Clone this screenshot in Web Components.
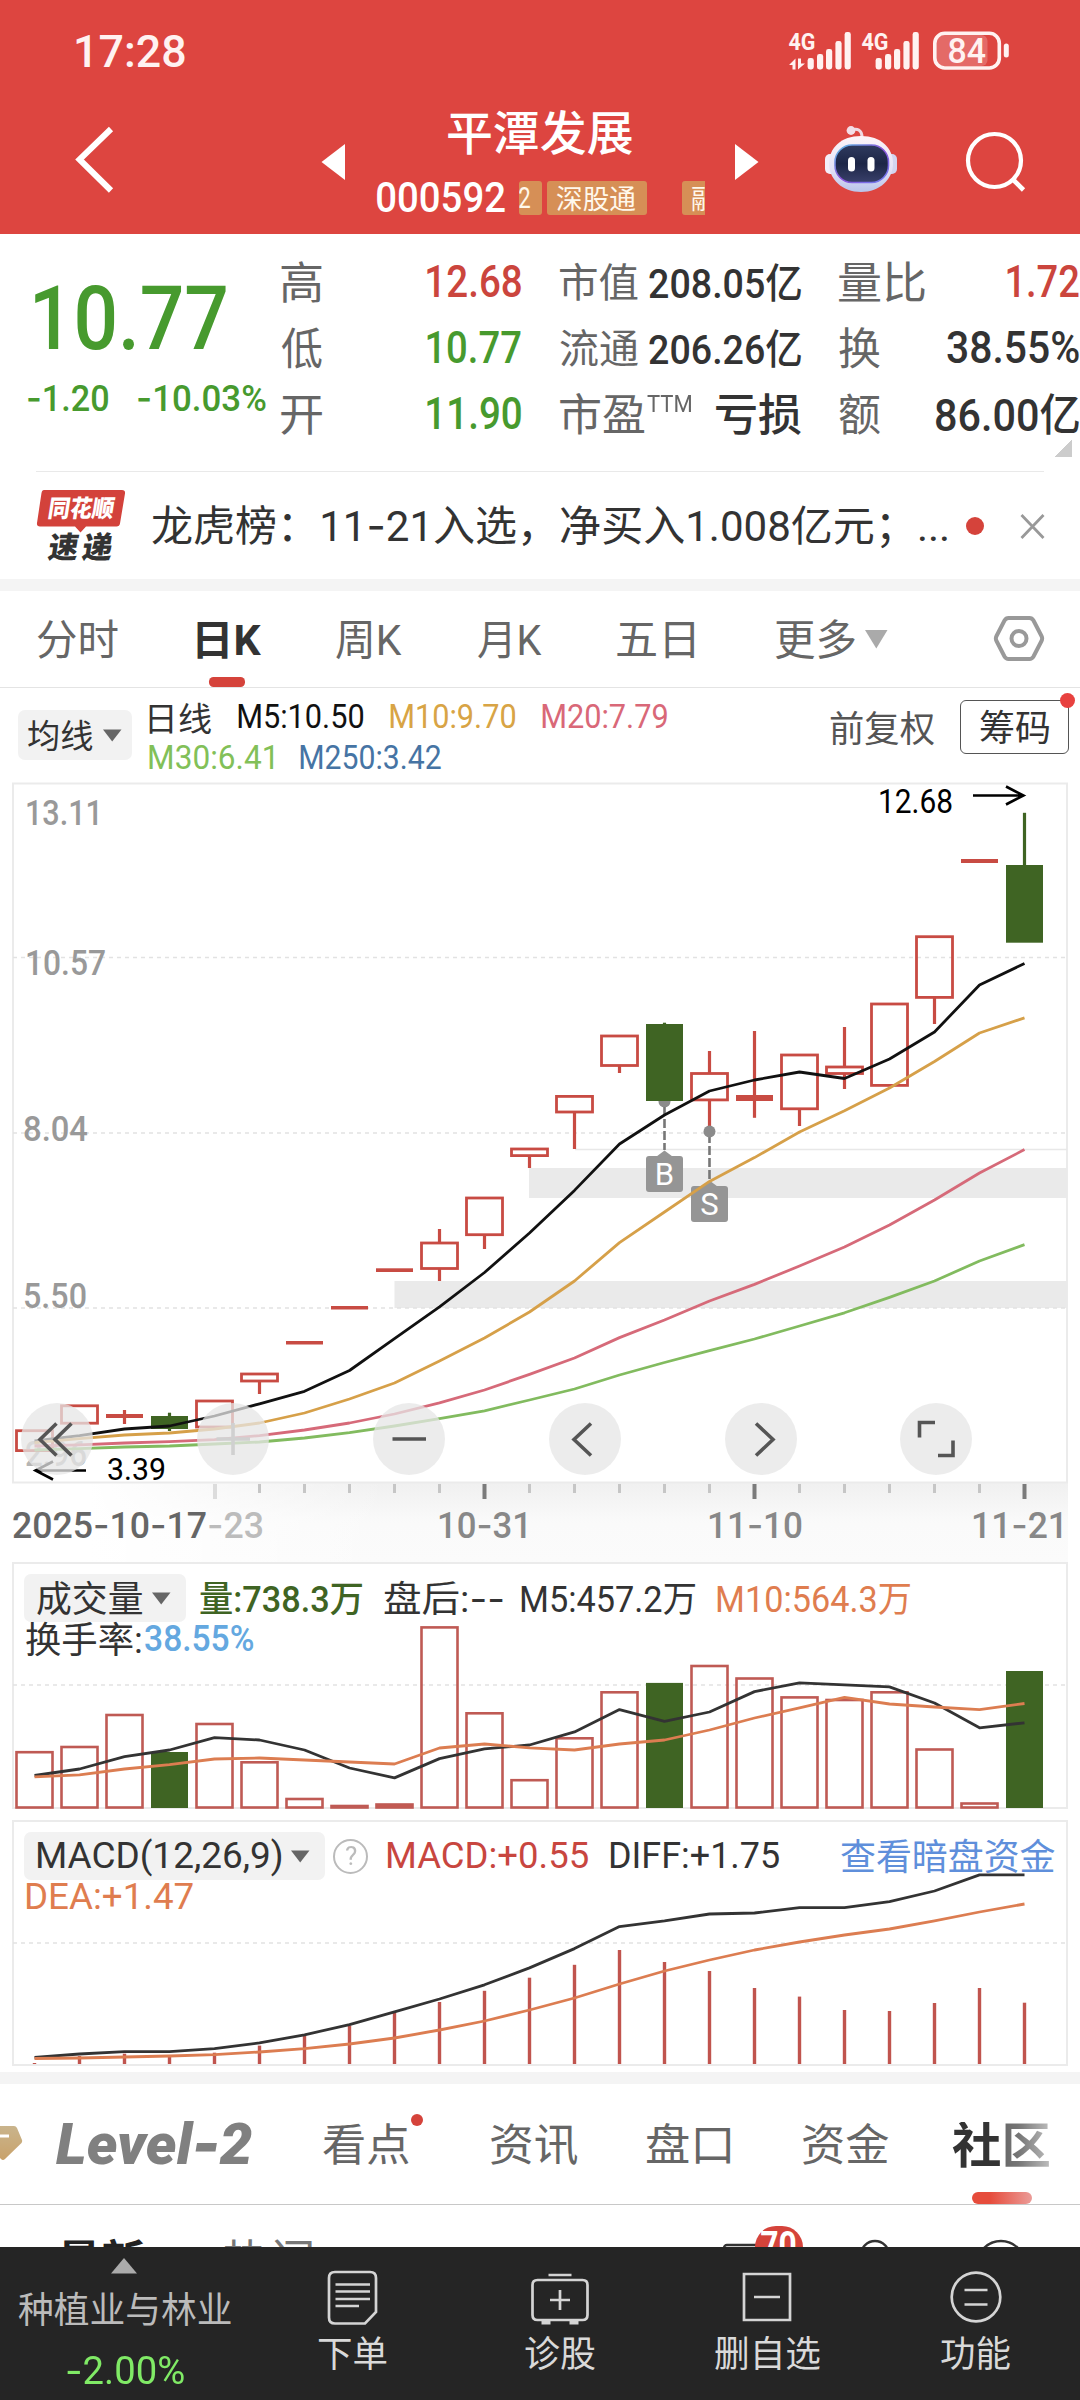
<!DOCTYPE html>
<html lang="zh-CN">
<head>
<meta charset="utf-8">
<title>平潭发展 000592</title>
<style>
html,body{margin:0;padding:0;background:#fff}
body{width:1080px;height:2400px;overflow:hidden;font-family:Roboto,"Noto Sans CJK SC",sans-serif;color:#333}
</style>
</head>
<body>
<stock-app></stock-app>
<script>
const make = (name, css, html, extra) => customElements.define(name, class extends HTMLElement {
  constructor() {
    super();
    const root = this.attachShadow({mode: 'open'});
    root.innerHTML = `<style>:host{display:block;box-sizing:border-box}svg{display:block;flex:none}*{box-sizing:border-box}${css}</style>${typeof html === 'function' ? html(this) : html}`;
    if (extra) extra(root, this);
  }
});

/* ---------- header ---------- */
const bars = (x) => [[0,58],[9.4,54],[18.4,49],[27.8,41],[37,32]]
  .map(([dx,y]) => `<rect x="${x+dx}" y="${y}" width="6.2" height="${69.5-y}" rx="2.4"/>`).join('');
make('status-bar', `
:host{display:flex;height:102px;align-items:center;justify-content:space-between;padding-left:76px;color:#fff2f1}
text{font:700 24px Roboto,sans-serif}
`, `<fit-text w="109" s="45" b="500">17:28</fit-text>
<svg width="300" height="102" viewBox="780 0 300 102" fill="#fff2f1">
<text x="788.5" y="50" textLength="27" lengthAdjust="spacingAndGlyphs">4G</text>
<text x="861.5" y="50" textLength="27" lengthAdjust="spacingAndGlyphs">4G</text>
${bars(807.6)}${bars(875.6)}
<path d="M789 65l6.500-6.500v11h-3v-4.500zM798 58.500v11l7-6h-4v-5z"/>
<rect x="936" y="35" width="51.500" height="31" rx="6" fill-opacity=".22"/>
<rect x="934.800" y="33.300" width="64.500" height="34.700" rx="10" fill="none" stroke="#fff2f1" stroke-width="3.600"/>
<rect x="1003.800" y="43.500" width="5" height="14" rx="2.500"/>
<text x="947.500" y="63" textLength="38.500" lengthAdjust="spacingAndGlyphs" style="font-size:35px;font-weight:500">84</text>
</svg>`);

make('title-bar', `
:host{display:flex;height:132px;color:#fff}
.mid{width:360px;height:132px;display:flex;flex-direction:column}
.name{height:60px;display:flex;align-items:center;padding-left:88px}
.code{height:72px;display:flex;align-items:center;padding-left:17px;gap:14px}
.tags{width:186px;height:34px;display:flex;overflow:hidden}
.tag{flex:none;height:34px;background:#d68f56;border-radius:3px;display:flex;align-items:center;color:#fff8ec}
`, `<svg width="360" height="132" viewBox="0 102 360 132">
<path d="M111 129L79.500 159.500L111 190.500" fill="none" stroke="#fff" stroke-width="6"/>
<path d="M321.500 162L345 144V180z" fill="#fff"/></svg>
<div class="mid">
<div class="name"><fit-text w="184" s="46.5" b="500">平潭发展</fit-text></div>
<div class="code"><fit-text w="128" s="42.5" b="500">000592</fit-text>
<div class="tags">
<div class="tag" style="width:22.5px"><fit-text w="11.5" s="29">2</fit-text></div>
<div class="tag" style="width:100px;margin-left:5.5px;padding-left:10px"><fit-text w="79" s="27">深股通</fit-text></div>
<div class="tag" style="width:60px;margin-left:35px;padding-left:10px"><fit-text w="25" s="27">融</fit-text></div>
</div></div></div>
<svg width="360" height="132" viewBox="720 102 360 132">
<defs><linearGradient id="h" x1="0" y1="0" x2="0" y2="1"><stop offset="0" stop-color="#fdf4f8"/><stop offset=".6" stop-color="#e4e2f6"/><stop offset="1" stop-color="#b9c4ea"/></linearGradient>
<linearGradient id="e" x1="0" y1="0" x2="1" y2="1"><stop offset="0" stop-color="#5fc3e6"/><stop offset=".5" stop-color="#8a50d8"/><stop offset="1" stop-color="#6f7ff0"/></linearGradient>
<linearGradient id="f" x1="0" y1="0" x2="0" y2="1"><stop offset="0" stop-color="#2f3a5e"/><stop offset=".5" stop-color="#1d2647"/><stop offset="1" stop-color="#39406a"/></linearGradient></defs>
<path d="M758.500 162L735 144V180z" fill="#fff"/>
<path d="M851 130.500c6-3 11-.5 11 7" fill="none" stroke="#f0d9e2" stroke-width="3"/><circle cx="851" cy="130.500" r="4.400" fill="#f3dde6"/>
<rect x="825" y="154" width="12" height="20" rx="5" fill="#f3eef9"/><rect x="885" y="154" width="12" height="20" rx="5" fill="#d3d5f0"/>
<path d="M861 136c20 0 32 12 32 27.500S880 192 861 192s-32-13-32-28.500S841 136 861 136z" fill="url(#h)"/>
<rect x="835" y="145" width="53.500" height="37.500" rx="17" fill="url(#f)" stroke="url(#e)" stroke-width="1.600"/>
<rect x="848" y="157" width="7" height="14.500" rx="3.500" fill="#fff"/><rect x="867.500" y="157" width="7" height="14.500" rx="3.500" fill="#fff"/>
<circle cx="994.500" cy="160.500" r="26.500" fill="none" stroke="#fff" stroke-width="4.200"/>
<path d="M1013 179.500l10.500 10.500" stroke="#fff" stroke-width="4.600"/></svg>`);

/* ---------- quote ---------- */
make('quote-panel', `
:host{display:grid;grid-template-columns:281px 240px 241px 240px;column-gap:0;height:237px;padding-top:15px;position:relative}
.price{color:#479a2e;padding:26px 0 0 35px}
.chg{display:flex;margin:16px 0 0 -8px;gap:29px}
.col{display:grid;grid-auto-rows:66px;color:#666}
.c2{margin-left:39px;margin-right:-39px}.c3{margin-left:77px;margin-right:-77px}
.r{display:flex;align-items:center;justify-content:space-between}
.l{display:flex;gap:2px}
.red{color:#cb453d}.gr{color:#479a2e}.k{color:#333}
i{position:absolute;right:8px;bottom:14px;width:18px;height:18px;background:linear-gradient(135deg,#fff0 50%,#ccc 50%)}
fit-text i{all:unset;font-family:Inter}
`, `<div class="price"><fit-text w="191" s="88.5" b="500">10.77</fit-text>
<div class="chg"><fit-text w="81" s="36.5" b="500"><i>-</i>1.20</fit-text><fit-text w="129" s="36.5" b="500"><i>-</i>10.03%</fit-text></div></div>
<div class="col">
<div class="r"><fit-text w="41" s="44">高</fit-text><fit-text class="red" w="94" s="44" b="500">12.68</fit-text></div>
<div class="r"><fit-text w="41" s="44">低</fit-text><fit-text class="gr" w="94" s="44" b="500">10.77</fit-text></div>
<div class="r"><fit-text w="41" s="44">开</fit-text><fit-text class="gr" w="94" s="44" b="500">11.90</fit-text></div></div>
<div class="col c2">
<div class="r"><fit-text w="78" s="40">市值</fit-text><fit-text class="k" w="152" s="41" b="500">208.05亿</fit-text></div>
<div class="r"><fit-text w="78" s="40">流通</fit-text><fit-text class="k" w="152" s="41" b="500">206.26亿</fit-text></div>
<div class="r"><div class="l"><fit-text w="85" s="44">市盈</fit-text><fit-text w="44" s="24">TTM</fit-text></div><fit-text class="k" w="85" s="44" b="500">亏损</fit-text></div></div>
<div class="col c3">
<div class="r"><fit-text w="86" s="44">量比</fit-text><fit-text class="red" w="72" s="44" b="500">1.72</fit-text></div>
<div class="r"><fit-text w="41" s="44">换</fit-text><fit-text class="k" w="132" s="44" b="500">38.55%</fit-text></div>
<div class="r"><fit-text w="41" s="44">额</fit-text><fit-text class="k" w="143" s="44" b="500">86.00亿</fit-text></div></div><i></i>`);

make('news-strip', `
:host{display:flex;align-items:center;height:108px;margin:0 36px;border-top:1.5px solid #e9e9e9}
text{font-family:"Noto Sans CJK SC",sans-serif;font-weight:900}
`, `<svg width="90" height="76" viewBox="36 487 90 76">
<path d="M44 489h78q3.500 0 3 3.500l-5 30q-.5 3-3.500 3H86l-5.500 6-5.500-6H40q-3.500 0-3-3.500l4.500-30q.5-3 2.500-3z" fill="#d3423b"/>
<g transform="translate(47 516) skewX(-9)"><text x="0" y="0" font-size="24" textLength="66" lengthAdjust="spacingAndGlyphs" fill="#fff">同花顺</text></g>
<g transform="translate(47 557) skewX(-9)"><text x="0" y="0" font-size="30" textLength="64" lengthAdjust="spacing" fill="#333">速递</text></g></svg>
<fit-text style="margin-left:26px" w="795" s="42.5">龙虎榜：11<i>-</i>21入选，净买入1.008亿元；...</fit-text>
<svg style="margin-left:14px" width="90" height="40" viewBox="961 505 90 40"><circle cx="975" cy="525" r="9" fill="#d5433b"/><path d="M1021.500 514l22 23m0-23l-22 23" stroke="#999" stroke-width="2.800"/></svg>`);

make('section-gap', ':host{height:12px;background:#f4f4f4}', '');

/* ---------- period tabs ---------- */
make('period-tabs', `
:host{display:flex;height:97px;align-items:center;border-bottom:1.5px solid #e4e4e4;color:#666;padding-left:37px}
.on{color:#333;position:relative;display:flex;height:95px;align-items:center}
.on::after{content:"";position:absolute;left:12px;bottom:0;width:36px;height:10px;border-radius:4.5px;background:#d5433b}
`, `<fit-text w="81" s="42">分时</fit-text>
<div class="on" style="margin-left:79px"><fit-text w="64" s="42" b="700">日K</fit-text></div>
<fit-text style="margin-left:75px" w="66" s="42">周K</fit-text>
<fit-text style="margin-left:76px" w="64" s="42">月K</fit-text>
<fit-text style="margin-left:75px" w="77" s="42">五日</fit-text>
<fit-text style="margin-left:81px" w="80" s="42">更多</fit-text>
<svg width="200" height="60" viewBox="856 609 200 60"><path d="M866 630h22.500l-11.200 18.500z" fill="#aaa"/>
<path d="M1009.500 618h21q2.500 0 4 2.500l8 15.500q1.300 2.500 0 5l-8 15.500q-1.500 2.500-4 2.500h-21q-2.500 0-4-2.500l-8-15.500q-1.300-2.500 0-5l8-15.500q1.500-2.500 4-2.500z" fill="none" stroke="#999" stroke-width="4"/><circle cx="1020" cy="638.500" r="7.500" fill="none" stroke="#999" stroke-width="4"/></svg>`);

make('pick-pill', `:host{display:flex;align-items:center;background:#f2f2f2;border-radius:7px;flex:none}
svg{margin-left:9.5px}`, `<slot></slot><svg width="19" height="13" viewBox="0 0 19 13"><path d="M0 .5h18.500L9.200 12.500z" fill="#666"/></svg>`);

make('ma-legend', `
:host{display:flex;height:86px;align-items:flex-start;padding-left:18px}
.l{display:grid;grid-auto-rows:41px;margin:8.5px 0 0 17px;width:519px}
.l div{display:flex;align-items:center;gap:27px}
.q{margin:0 0 0 162px;height:80px;display:flex;align-items:center}
.c{margin:12px 0 0 26px;width:109px;height:54px;border:1.8px solid #555;border-radius:6px;display:flex;align-items:center;justify-content:center;position:relative}
.c::after{content:"";position:absolute;right:-7px;top:-8px;width:15px;height:15px;border-radius:50%;background:#e8413f}
`, `<pick-pill style="width:114px;height:50px;margin-top:22px;padding-left:10px"><fit-text w="65" s="33.5">均线</fit-text></pick-pill>
<div class="l"><div><fit-text w="62" s="33">日线</fit-text><fit-text w="125" s="33.5" style="color:#111">M5:10.50</fit-text><fit-text w="125" s="33.5" style="color:#d8a445">M10:9.70</fit-text><fit-text w="125" s="33.5" style="color:#d96878">M20:7.79</fit-text></div>
<div><fit-text w="124" s="33.5" style="color:#82c058">M30:6.41</fit-text><fit-text w="141" s="33.5" style="color:#4674a4">M250:3.42</fit-text></div></div>
<div class="q"><fit-text w="104" s="36" style="color:#555">前复权</fit-text></div>
<div class="c"><fit-text w="69" s="36">筹码</fit-text></div>`);

/* ---------- charts ---------- */
const X = i => 34.5 + 45 * i;
const RED = '#c84b43', GREEN = '#3f6423';
const line = (ys, c, w = 2.8) => `<polyline fill="none" stroke="${c}" stroke-width="${w}" stroke-linejoin="round" points="${ys.map((y, i) => X(i) + ',' + y).join(' ')}"/>`;
const txt = (s, x, y, w, size, c, extra = '') => `<text x="${x}" y="${y}" font-size="${size}" fill="${c}" textLength="${w}" lengthAdjust="spacingAndGlyphs" ${extra}>${s.replace(/-/g, '<tspan font-family="Inter">-</tspan>')}</text>`;
const dash = y => `<path d="M13 ${y}H1067" stroke="#e2e2e2" stroke-width="1.500" stroke-dasharray="4 4"/>`;
// body top, body bottom, wick top, wick bottom, kind: h hollow, g filled, s solid line
const K = [[1430.7,1450.6],[1405.8,1423.2],[1414,1418,1410,1424,'s'],[1416,1429,1412.7,1431,'g'],[1401,1427,1401,1430],[1374,1381,1374,1394],
[1341,1344.5,0,0,'s'],[1306,1309.500,0,0,'s'],[1268.300,1272,0,0,'s'],[1243,1268.500,1229,1281],[1198,1234.700,1198,1249],[1149,1155.600,1149,1168],
[1096.400,1112,1096.400,1149],[1036,1065.500,1036,1073],[1024,1101,1022.700,1101,'g'],[1073.500,1099.900,1051,1131.700],[1095,1101,1031,1117.800,'s'],
[1055,1108.800,1055,1126],[1067,1073.500,1027,1089],[1004,1085.400],[936.700,997.400,936.700,1024],[859,863,0,0,'s'],[865,942.700,812.800,942.700,'g']];
const candles = K.map(([a,b,c,d,k='h'], i) => {
  const x = X(i), col = k === 'g' ? GREEN : RED;
  let s = '';
  if (c && c < a) s += `<path d="M${x} ${c}V${a}" stroke="${col}" stroke-width="3.200"/>`;
  if (d && d > b) s += `<path d="M${x} ${b}V${d}" stroke="${col}" stroke-width="3.200"/>`;
  s += k === 'h' ? `<rect x="${x-18}" y="${a}" width="36" height="${b-a}" fill="none" stroke="${col}" stroke-width="2.800"/>`
                 : `<rect x="${x-18.5}" y="${a}" width="37" height="${b-a}" fill="${col}"/>`;
  return s;
}).join('');
const M5 = [1441,1435.6,1429,1426,1416,1403.8,1391.3,1370.5,1338.6,1306.8,1272.5,1233,1190.4,1144,1115,1091,1080,1072,1078.5,1059,1032,985,963.5];
const M10 = [1442.6,1438.6,1435,1433,1429,1423,1413,1399,1383,1361,1338,1312,1281,1242.6,1212,1181.4,1157.6,1132,1110.8,1088,1061.5,1033,1017.8];
const M20 = [1446,1444.8,1443,1441.6,1439.6,1435.6,1430,1423,1414,1402.8,1390,1374.4,1358,1337.6,1320,1301,1284.4,1266,1247,1225,1200,1173,1149.6];
const M30 = [1450,1448.6,1447,1446,1444,1442,1438,1432.6,1426,1418.7,1410.8,1400,1389,1375,1362.5,1350.6,1339,1326,1312.8,1297.4,1281,1261,1244.6];
const flag = (x, y, s) => `<path d="M${x} ${y-6}l8 6h-16z" fill="#959595"/><rect x="${x-18.500}" y="${y-0.500}" width="37" height="36" rx="3" fill="#959595"/><text x="${x}" y="${y+28}" font-size="31" fill="#fff" text-anchor="middle">${s}</text>`;
const ticks = Array.from({length: 19}, (_, k) => k + 4).map(i => {
  const major = [10,16,22].includes(i), first = i === 4;
  return `<path d="M${X(i)+(first?0.500:0)} 1484v${major||first?15:9}" stroke="${major?'#7b7b7b':first?'#dcdcdc':'#c6c6c6'}" stroke-width="${major||first?4:3}"/>`;
}).join('');

make('chart-tools', `
:host{display:flex;gap:103.900px;padding:629px 0 0 21px;height:701px}
div{width:72px;height:72px;border-radius:50%;background:rgba(230,230,230,.75)}
svg{fill:none;stroke:#555;stroke-width:3.600}`,
['M35.500 20.500L19 36.500L35.500 52.500M50.500 20.500L34 36.500L50.500 52.500','M19.500 36H53M36 20V52','M19.500 36H53','M42 20.500L25 36.500L42 52.500','M31 20.500L48 36.500L31 52.500','M35 19.500H19.500V34.500M38 52.500H53V37.500']
.map((d,i) => `<div><svg width="72" height="72" viewBox="0 0 72 72"${i===1?' style="stroke:#d0d0d0"':''}><path d="${d}"/></svg></div>`).join(''));

make('kline-chart', `
:host{display:grid;height:784px}
svg{grid-area:1/1}chart-tools{grid-area:1/1}
text{font-family:Roboto,"Noto Sans CJK SC",sans-serif}`,
`<svg width="1080" height="789" viewBox="0 774 1080 789">
<defs><linearGradient id="a" x1="0" y1="0" x2="0" y2="1"><stop offset="0" stop-color="#f0f0f0"/><stop offset=".5" stop-color="#fafafa"/><stop offset="1" stop-color="#fbfbfb"/></linearGradient>
<linearGradient id="b" x1="0" y1="0" x2="1" y2="0"><stop offset="0" stop-color="#fff"/><stop offset="1" stop-color="#fff" stop-opacity="0"/></linearGradient></defs>
<rect x="90" y="1483" width="978" height="80" fill="url(#a)"/><rect x="89" y="1483" width="300" height="80" fill="url(#b)"/>
<rect x="13" y="783.500" width="1054" height="699" fill="none" stroke="#ebebeb" stroke-width="2"/>
<rect x="529" y="1168" width="538" height="30" fill="#eaeaea"/><rect x="394.500" y="1281" width="672" height="27" fill="#eaeaea"/>
${dash(957.6)}${dash(1133)}${dash(1308)}<path d="M575 1149.500H1067" stroke="#e8e8e8" stroke-width="1.300"/>
${txt('2.96',25,1466,62,35.500,'#b5b5b5','font-weight="500"')}
<circle cx="664.500" cy="1101.500" r="6" fill="#8b8b8b"/>
${candles}
<path d="M664.500 1107V1150M709.500 1134V1180" stroke="#777" stroke-width="2.600" stroke-dasharray="9 3"/>
<circle cx="709.500" cy="1131.500" r="6" fill="#8b8b8b"/>
${flag(664.500,1156.500,'B')}${flag(709.500,1186.500,'S')}
${line(M5,'#111')}${line(M10,'#d6a049')}${line(M20,'#d66a79')}${line(M30,'#82bb5f')}
${txt('13.11',25,825,78,35.500,'#999','font-weight="500"')}${txt('10.57',25,975,81,35.500,'#999','font-weight="500"')}
${txt('8.04',23,1141,65,35.500,'#999','font-weight="500"')}${txt('5.50',23,1308,64,35.500,'#999','font-weight="500"')}
${txt('12.68',878,813,75,32.500,'#000')}${txt('3.39',107,1480,59,32,'#000')}
<path d="M973 795.500H1023M1006 786.500L1023.500 795.500L1006 804.500" fill="none" stroke="#000" stroke-width="2.600"/>
<path d="M86 1470.500H36M53 1461.500L35.500 1470.500L53 1479.500" fill="none" stroke="#000" stroke-width="2.600"/>
${ticks}
${txt('2025-10-17',12,1537.500,195,36,'#666','font-weight="500"')}${txt('-23',207,1537.500,57,36,'#bcbcbc','font-weight="500"')}
${txt('10-31',437,1537.500,95,36,'#888','font-weight="500"')}${txt('11-10',707,1537.500,96,36,'#888','font-weight="500"')}${txt('11-21',971,1537.500,97,36,'#888','font-weight="500"')}
</svg><chart-tools></chart-tools>`);

const V = [1752.2,1747,1715,1752,1724,1762.3,1799,1806,1804.5,1627.4,1713.3,1780.2,1738.3,1692.3,1682.9,1666,1678.5,1697.4,1700,1692.3,1749.5,1803.5,1671];
const V5 = [1775.5,1769,1756.6,1750,1737.6,1740,1750,1768,1777.9,1758.6,1748.8,1745,1731.9,1709.6,1721.4,1712,1691.6,1682.9,1684.9,1686.9,1703,1727.8,1722.8];
const V10 = [1776.8,1774.8,1769,1764.7,1759,1758,1760,1762,1764,1748,1744,1747.8,1750,1744,1740,1730,1718,1707.9,1697.4,1704,1707,1709.6,1703.5];
const panelCss = `
:host{display:grid;height:257px}
svg{grid-area:1/1}
.h{grid-area:1/1;display:flex;flex-direction:column;width:1080px}
.r1{display:flex;align-items:center;height:48px;padding-left:24px}
.r2{display:flex;align-items:center;height:34px;padding-left:26px}`;
make('volume-chart', panelCss + `.h{padding-top:16px}`, `<svg width="1080" height="257" viewBox="0 1558 1080 257">
<rect x="13" y="1563" width="1054" height="245" fill="none" stroke="#ebebeb" stroke-width="2"/>${dash(1685)}
${V.map((y,i) => [3,14,22].includes(i) ? `<rect x="${X(i)-18.500}" y="${y}" width="37" height="${1808-y}" fill="${GREEN}"/>` : `<rect x="${X(i)-18}" y="${y}" width="36" height="${1807.5-y}" fill="${i===7||i===8?'#d8564d':'none'}" stroke="#bf5a54" stroke-width="2.600"/>`).join('')}
${line(V5,'#333')}${line(V10,'#dc7d51')}</svg>
<div class="h"><div class="r1">
<pick-pill style="width:162px;height:48px;padding-left:13px"><fit-text w="105" s="36.5">成交量</fit-text></pick-pill>
<fit-text style="margin-left:14px;color:#3f6423" w="162" s="36" b="500">量:738.3万</fit-text>
<fit-text style="margin-left:22px" w="121" s="36">盘后:<i>--</i></fit-text>
<fit-text style="margin-left:16px" w="174" s="36">M5:457.2万</fit-text>
<fit-text style="margin-left:22px;color:#df7d4f" w="193" s="36">M10:564.3万</fit-text></div>
<div class="r2"><fit-text w="115" s="36.5">换手率:</fit-text><fit-text style="margin-left:4px;color:#64a8e0" w="108" s="36" b="500">38.55%</fit-text></div></div>`);

const D = [2057.4,2054,2051.7,2051.7,2048.6,2042.9,2034.8,2024.6,2011.8,1999,1984.8,1967.9,1948.6,1926.6,1920.9,1914,1913,1907.7,1907.7,1901.6,1891,1874.9,1874.9];
const E = [2058.5,2058,2057,2056,2054.7,2052,2048.6,2044,2038,2030,2021,2010,1998,1984,1971,1960,1950,1942,1935,1929,1920.9,1912,1904];
const H = [2063,2056,2053.7,2056,2052.7,2045.6,2035.5,2025.7,2012.5,2002,1990.8,1977.7,1964.8,1950,1962,1971,1988,1996.6,2010,2011,2003,1988,2002.7];
make('macd-chart', panelCss + `.h{padding-top:17px}.q{width:35px;height:35px;border:2.500px solid #bbb;border-radius:50%;margin-left:8px;display:flex;align-items:center;justify-content:center;color:#bbb}`,
`<svg width="1080" height="257" viewBox="0 1815 1080 257">
<rect x="13" y="1821" width="1054" height="244" fill="none" stroke="#ebebeb" stroke-width="2"/>${dash(1943)}
${H.map((y,i) => `<path d="M${X(i)} ${y}V2064" stroke="#c0544e" stroke-width="3.400"/>`).join('')}
${line(D,'#333')}${line(E,'#dc7d51')}</svg>
<div class="h"><div class="r1">
<pick-pill style="width:301px;height:48px;padding-left:13px"><fit-text w="244" s="36">MACD(12,26,9)</fit-text></pick-pill>
<div class="q"><fit-text w="12" s="26">?</fit-text></div>
<fit-text style="margin-left:19px;color:#c8463f" w="201" s="36">MACD:+0.55</fit-text>
<fit-text style="margin-left:22px" w="169" s="36">DIFF:+1.75</fit-text>
<fit-text style="margin-left:62px;color:#5f8fdb" w="214" s="36.5">查看暗盘资金</fit-text></div>
<div class="r2"><fit-text style="color:#df7d4f" w="167" s="36">DEA:+1.47</fit-text></div></div>`);

/* ---------- content tabs ---------- */
make('content-tabs', `
:host{display:flex;height:121px;align-items:center;border-bottom:1.500px solid #c8c8c8;color:#666}
.n,.on{position:relative;display:flex;height:119px;align-items:center}
.n::after{content:"";position:absolute;right:-14px;top:29px;width:12px;height:12px;border-radius:50%;background:#d5433b}
.on::after{content:"";position:absolute;left:20px;bottom:0;width:60px;height:12px;border-radius:6px;background:linear-gradient(90deg,#e64c3c 30%,#eb9c98)}
`, `<svg width="24" height="60" viewBox="0 2114 24 60"><defs><linearGradient id="g" x1="0" y1="0" x2="0" y2="1"><stop offset="0" stop-color="#c9b48c"/><stop offset="1" stop-color="#c9a26b"/></linearGradient></defs>
<path d="M-20 2126H14q2 0 3 2l5 12q.5 1.500-.5 3L5 2159q-2 2-4 0L-20 2140z" fill="url(#g)"/><path d="M-2 2136H9" stroke="#fff" stroke-width="3"/></svg>
<fit-text style="margin-left:32px;color:#808080;font-style:italic" w="196" s="58" b="900">Level<i>-</i>2</fit-text>
<div class="n" style="margin-left:71px"><fit-text w="86" s="44.5">看点</fit-text></div>
<fit-text style="margin-left:82px" w="87" s="44.5">资讯</fit-text>
<fit-text style="margin-left:69px" w="83" s="44.5">盘口</fit-text>
<fit-text style="margin-left:73px" w="86" s="44.5">资金</fit-text>
<div class="on" style="margin-left:63px"><fit-text w="97" s="49" b="700" fade>社区</fit-text></div>`);

make('feed-head', `
:host{display:flex;height:42px;overflow:hidden;align-items:flex-start}
fit-text{margin-top:33px}
.b{position:relative;margin-left:408px}
.n{position:absolute;left:35px;top:21px;width:48px;height:42px;border-radius:21px;background:#d5433b;color:#fff;padding-left:6px}
.n fit-text{margin-top:1px}`,
`<fit-text style="margin-left:58px;color:#222" w="87" s="44.500" b="700">最新</fit-text>
<fit-text style="margin-left:78px;color:#777" w="89" s="44.500">热门</fit-text>
<div class="b"><svg width="350" height="42" viewBox="720 2205 350 42" fill="none" stroke="#333" stroke-width="2.400"><rect x="724" y="2245" width="50" height="40" rx="3"/><circle cx="875" cy="2255" r="14"/><circle cx="1001" cy="2265" r="24"/></svg>
<div class="n"><fit-text w="35" s="38" b="700">70</fit-text></div></div>`);

/* ---------- bottom bar ---------- */
make('bar-item', `:host{display:flex;flex-direction:column;align-items:center;color:#d9d9d9}
.i{height:88px;padding-top:20px}`, `<div class="i"><slot name="icon"></slot></div><slot></slot>`);
make('bottom-bar', `
:host{display:grid;grid-template-columns:248px 208px 207px 208px 209px;height:153px;background:#252525}
.s{display:flex;flex-direction:column;align-items:center;color:#bbb;padding-top:11px}
svg{fill:none;stroke:#d4d4d4;stroke-width:2.700}`,
`<div class="s"><svg width="26" height="16" viewBox="0 0 26 16"><path d="M13 0L26 15.500H0z" fill="#ababab" stroke="none"/></svg>
<fit-text style="margin-top:17px" w="213" s="36.500">种植业与林业</fit-text>
<fit-text style="margin-top:24px;color:#80ea66" w="119" s="38.500"><i>-</i>2.00%</fit-text></div>
<bar-item><svg slot="icon" width="60" height="60" viewBox="322 2267 60 60"><path d="M335 2272H370q6 0 6 6V2312L365 2323.500H335q-6 0-6-6V2278q0-6 6-6zM335.500 2284.500H370M335.500 2291.500H370M335.500 2299H370M335.500 2306H359"/></svg><fit-text w="69" s="36">下单</fit-text></bar-item>
<bar-item><svg slot="icon" width="60" height="60" viewBox="529.500 2267 60 60"><path d="M548 2275H571M537 2280H582q5 0 5 5V2315q0 5-5 5H537q-5 0-5-5V2285q0-5 5-5zM559.500 2290V2310M549.500 2300H569.500"/><path d="M541 2322.500H550M569 2322.500H578" stroke-width="4"/></svg><fit-text w="70" s="36">诊股</fit-text></bar-item>
<bar-item><svg slot="icon" width="60" height="60" viewBox="737 2267 60 60"><path d="M744 2274H790V2320H744zM754 2297H780"/></svg><fit-text w="105" s="36">删自选</fit-text></bar-item>
<bar-item><svg slot="icon" width="60" height="60" viewBox="945.500 2267 60 60"><circle cx="975.500" cy="2297" r="24.300"/><path d="M964 2290H987M964 2304.500H987"/></svg><fit-text w="69" s="36">功能</fit-text></bar-item>`);

make('stock-app', `:host{width:1080px;height:2400px;overflow:hidden}header{background:#dd4540}`,
`<header><status-bar></status-bar><title-bar></title-bar></header>
<quote-panel></quote-panel><news-strip></news-strip><section-gap></section-gap>
<period-tabs></period-tabs><ma-legend></ma-legend>
<kline-chart></kline-chart><volume-chart></volume-chart><macd-chart></macd-chart>
<section-gap></section-gap><content-tabs></content-tabs><feed-head></feed-head><bottom-bar></bottom-bar>`);

/* Text whose drawn glyphs fill exactly w pixels at font size s; <i> marks a long dash. */
const ctx = document.createElement('canvas').getContext('2d');
customElements.define('fit-text', class extends HTMLElement {
  constructor() {
    super();
    this.attachShadow({mode: 'open'}).innerHTML = `<style>
:host{display:block;flex:none;white-space:nowrap;line-height:1}
span{display:inline-block;transform-origin:0 50%}
::slotted(i){font-family:Inter,sans-serif;font-style:inherit;line-height:0}
:host([fade]) span{background:linear-gradient(90deg,#333 48%,#6a6a6a 54%,#777 68%,#c0c0c0);-webkit-background-clip:text;background-clip:text;color:transparent}
</style><span><slot></slot></span>`;
  }
  connectedCallback() {
    const w = +this.getAttribute('w');
    this.style.fontSize = this.getAttribute('s') + 'px';
    this.style.height = this.getAttribute('s') + 'px';
    this.style.width = w + 'px';
    if (this.hasAttribute('b')) this.style.fontWeight = this.getAttribute('b');
    const cs = getComputedStyle(this);
    ctx.font = `${cs.fontStyle} ${cs.fontWeight} ${cs.fontSize} ${cs.fontFamily}`;
    const m = ctx.measureText(this.textContent);
    const span = this.shadowRoot.querySelector('span');
    const bearings = m.width - m.actualBoundingBoxLeft - m.actualBoundingBoxRight;
    const k = w / (span.getBoundingClientRect().width - bearings);
    const dy = /[\u4e00-\u9fff]/.test(this.textContent) ? 1.5 : 0;
    span.style.transform = `translate(${m.actualBoundingBoxLeft * k}px, ${dy}px) scaleX(${k})`;
  }
});
</script>
</body>
</html>
